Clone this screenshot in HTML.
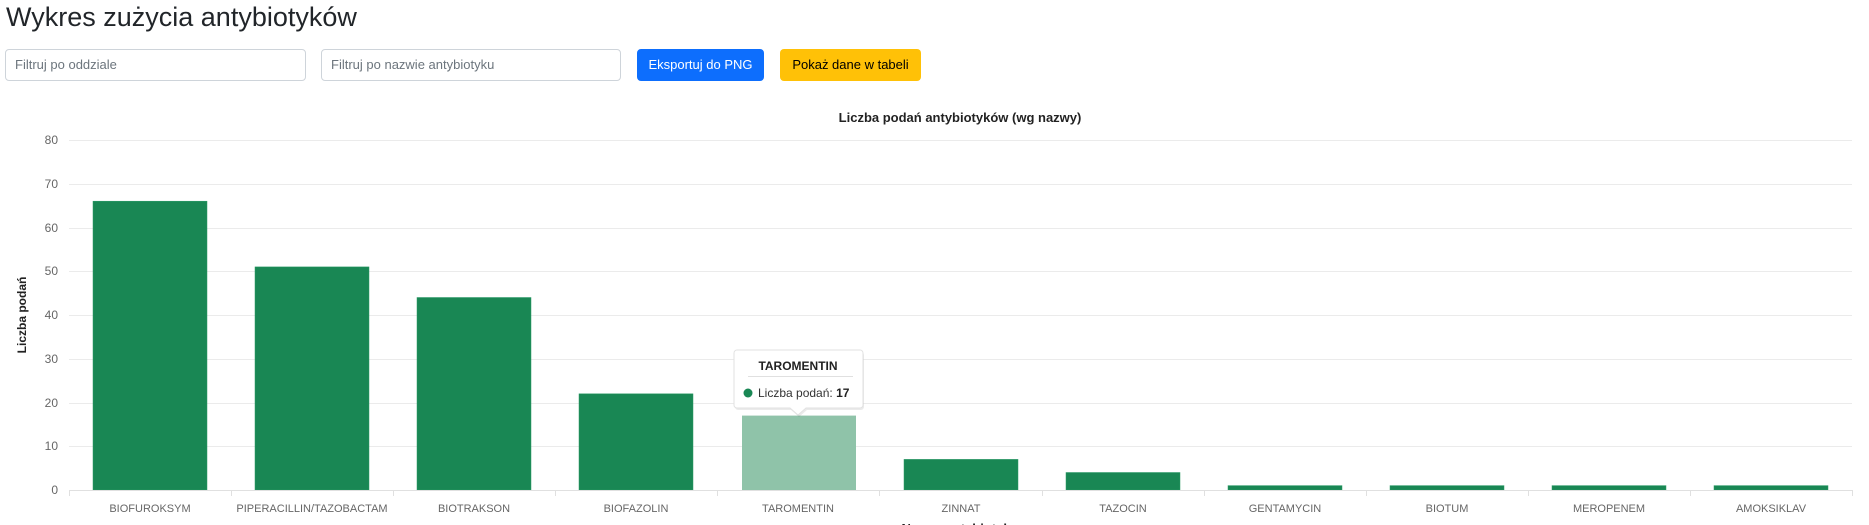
<!DOCTYPE html>
<html><head><meta charset="utf-8">
<style>
html,body{margin:0;padding:0;background:#fff;width:1869px;height:525px;overflow:hidden;font-family:"Liberation Sans","DejaVu Sans",sans-serif;}
h1{position:absolute;left:6px;top:0;margin:0;font-size:27px;font-weight:400;color:#212529;line-height:32px;top:1px;}
.inp{position:absolute;top:49px;height:30px;border:1px solid #ced4da;border-radius:4px;box-sizing:content-box;font-size:13px;color:#6c757d;line-height:30px;padding-left:9px;}
.btn{position:absolute;top:49px;height:32px;border-radius:4px;font-size:13px;line-height:32px;text-align:center;}
</style></head><body>
<h1>Wykres zużycia antybiotyków</h1>
<div class="inp" style="left:5px;width:290px">Filtruj po oddziale</div>
<div class="inp" style="left:321px;width:289px">Filtruj po nazwie antybiotyku</div>
<div class="btn" style="left:637px;width:127px;background:#0d6efd;color:#fff">Eksportuj do PNG</div>
<div class="btn" style="left:780px;width:141px;background:#ffc107;color:#000">Pokaż dane w tabeli</div>
<svg width="1869" height="525" style="position:absolute;left:0;top:0" font-family="Liberation Sans, DejaVu Sans, sans-serif">
<text x="960" y="122" text-anchor="middle" font-size="13" font-weight="bold" fill="#222">Liczba podań antybiotyków (wg nazwy)</text>
<g stroke="#ebebeb" stroke-width="1">
<line x1="69" x2="1852" y1="140.5" y2="140.5"/><line x1="69" x2="1852" y1="184.5" y2="184.5"/>
<line x1="69" x2="1852" y1="228.5" y2="228.5"/><line x1="69" x2="1852" y1="271.5" y2="271.5"/>
<line x1="69" x2="1852" y1="315.5" y2="315.5"/><line x1="69" x2="1852" y1="359.5" y2="359.5"/>
<line x1="69" x2="1852" y1="403.5" y2="403.5"/><line x1="69" x2="1852" y1="446.5" y2="446.5"/>
</g>
<g font-size="12" fill="#666" text-anchor="end">
<text x="58" y="144">80</text><text x="58" y="188">70</text><text x="58" y="232">60</text><text x="58" y="275">50</text><text x="58" y="319">40</text><text x="58" y="363">30</text><text x="58" y="407">20</text><text x="58" y="450">10</text><text x="58" y="494">0</text>
</g>
<text transform="translate(26,315) rotate(-90)" text-anchor="middle" font-size="12" font-weight="bold" fill="#222">Liczba podań</text>
<g fill="#198754" stroke="#2a9a66" stroke-width="0.5">
<rect x="93" y="201.2" width="114" height="288.8"/>
<rect x="255" y="266.9" width="114" height="223.1"/>
<rect x="417" y="297.5" width="114" height="192.5"/>
<rect x="579" y="393.8" width="114" height="96.2"/>
<rect x="904" y="459.4" width="114" height="30.6"/>
<rect x="1066" y="472.5" width="114" height="17.5"/>
<rect x="1228" y="485.6" width="114" height="4.4"/>
<rect x="1390" y="485.6" width="114" height="4.4"/>
<rect x="1552" y="485.6" width="114" height="4.4"/>
<rect x="1714" y="485.6" width="114" height="4.4"/>
</g>
<rect x="742" y="415.6" width="114" height="74.4" fill="#8fc3a9"/>
<line x1="69" x2="1852" y1="490.5" y2="490.5" stroke="#e0e0e0"/>
<g stroke="#e0e0e0">
<line x1="69.5" x2="69.5" y1="490" y2="496"/><line x1="231.5" x2="231.5" y1="490" y2="496"/><line x1="393.5" x2="393.5" y1="490" y2="496"/><line x1="555.5" x2="555.5" y1="490" y2="496"/><line x1="717.5" x2="717.5" y1="490" y2="496"/><line x1="879.5" x2="879.5" y1="490" y2="496"/><line x1="1042.5" x2="1042.5" y1="490" y2="496"/><line x1="1204.5" x2="1204.5" y1="490" y2="496"/><line x1="1366.5" x2="1366.5" y1="490" y2="496"/><line x1="1528.5" x2="1528.5" y1="490" y2="496"/><line x1="1690.5" x2="1690.5" y1="490" y2="496"/><line x1="1852.5" x2="1852.5" y1="490" y2="496"/>
</g>
<g font-size="11" fill="#666" text-anchor="middle">
<text x="150" y="512">BIOFUROKSYM</text><text x="312" y="512">PIPERACILLIN/TAZOBACTAM</text><text x="474" y="512">BIOTRAKSON</text><text x="636" y="512">BIOFAZOLIN</text><text x="798" y="512">TAROMENTIN</text><text x="961" y="512">ZINNAT</text><text x="1123" y="512">TAZOCIN</text><text x="1285" y="512">GENTAMYCIN</text><text x="1447" y="512">BIOTUM</text><text x="1609" y="512">MEROPENEM</text><text x="1771" y="512">AMOKSIKLAV</text>
</g>
<text x="960" y="533" text-anchor="middle" font-size="13" font-weight="bold" fill="#222">Nazwa antybiotyku</text>
<g filter="none">
<path d="M737,350 H860 a3,3 0 0 1 3,3 V405 a3,3 0 0 1 -3,3 H806 L798,415 L790,408 H737 a3,3 0 0 1 -3,-3 V353 a3,3 0 0 1 3,-3 Z" fill="#000" opacity="0.08" transform="translate(1,2)"/>
<path d="M737,350 H860 a3,3 0 0 1 3,3 V405 a3,3 0 0 1 -3,3 H806 L798,415 L790,408 H737 a3,3 0 0 1 -3,-3 V353 a3,3 0 0 1 3,-3 Z" fill="#fff" stroke="#e2e2e2"/>
</g>
<text x="798" y="370" text-anchor="middle" font-size="12" font-weight="bold" fill="#222">TAROMENTIN</text>
<line x1="748" x2="853" y1="376.5" y2="376.5" stroke="#e0e0e0"/>
<circle cx="748" cy="393" r="4.5" fill="#198754"/>
<text x="758" y="397" font-size="12" fill="#333">Liczba podań: <tspan font-weight="bold" fill="#222">17</tspan></text>
</svg>
</body></html>
